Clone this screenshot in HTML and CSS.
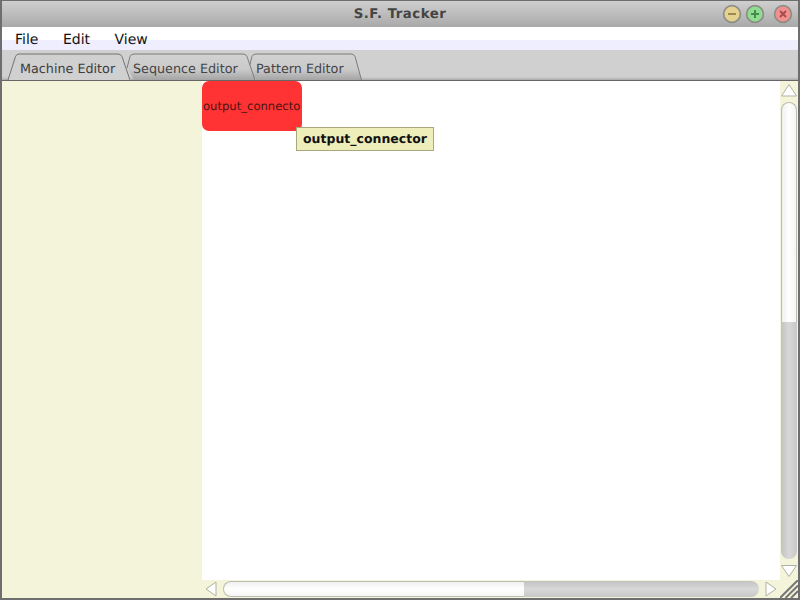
FILE: index.html
```html
<!DOCTYPE html>
<html>
<head>
<meta charset="utf-8">
<title>S.F. Tracker</title>
<link rel="stylesheet" href="styles.css">
</head>
<body>
<div class="window">
  <header class="titlebar">
    <div class="title">S.F. Tracker</div>
    <div class="controls">
      <svg class="ctl ctl-min" width="20" height="20" viewBox="0 0 20 20"><defs><filter id="soft" x="-10%" y="-10%" width="120%" height="120%"><feGaussianBlur stdDeviation="0.35"/></filter></defs><g filter="url(#soft)"><circle cx="10" cy="10" r="8.4" fill="#e4d28e" stroke="#8e8e86" stroke-width="1.7"/><rect x="6" y="9" width="8" height="2" fill="#9b8b52"/></g></svg>
      <svg class="ctl ctl-max" width="20" height="20" viewBox="0 0 20 20"><g filter="url(#soft)"><circle cx="10" cy="10" r="8.4" fill="#90dc90" stroke="#8e8e86" stroke-width="1.7"/><path d="M6 10h8M10 6v8" stroke="#458a50" stroke-width="2"/></g></svg>
      <svg class="ctl ctl-close" width="20" height="20" viewBox="0 0 20 20"><g filter="url(#soft)"><circle cx="10" cy="10" r="8.4" fill="#f29090" stroke="#8e8e86" stroke-width="1.7"/><path d="M7 7l6 6M13 7l-6 6" stroke="#a84c4c" stroke-width="2"/></g></svg>
    </div>
  </header>
  <nav class="menubar">
    <span class="menu-item">File</span>
    <span class="menu-item">Edit</span>
    <span class="menu-item">View</span>
  </nav>
  <div class="tabbar">
    <svg width="0" height="0" class="defs"><defs><linearGradient id="tabfill" x1="0" y1="0" x2="0" y2="1"><stop offset="0" stop-color="#d2d2d2"/><stop offset="0.6" stop-color="#cacaca"/><stop offset="1" stop-color="#a4a4a4"/></linearGradient></defs></svg>
    <div class="tab tab-1">
      <svg class="tab-shape" viewBox="0 0 124 27" preserveAspectRatio="none"><path d="M2 27L9.5 3.5Q10.5 1 13 1H112Q115 1 116 3.5L124 27Z" fill="#d0d0d0" stroke="none"/><path d="M2 27L9.5 3.5Q10.5 1 13 1H112Q115 1 116 3.5L124 27" fill="none" stroke="#737373"/></svg>
      <span class="tab-label">Machine Editor</span>
    </div>
    <div class="tab tab-2">
      <svg class="tab-shape" viewBox="0 0 130 27" preserveAspectRatio="none"><path d="M2 15L5 3.5Q6 1 9 1H118Q121 1 122 3.5L130 27H9Z" fill="url(#tabfill)"/><path d="M2 15L5 3.5Q6 1 9 1H118Q121 1 122 3.5L130 27" fill="none" stroke="#7c7c7c"/></svg>
      <span class="tab-label">Sequence Editor</span>
    </div>
    <div class="tab tab-3">
      <svg class="tab-shape" viewBox="0 0 113 27" preserveAspectRatio="none"><path d="M0 15L3 3.5Q4 1 7 1H102Q105 1 106 3.5L112.5 27H7Z" fill="url(#tabfill)"/><path d="M0 15L3 3.5Q4 1 7 1H102Q105 1 106 3.5L112.5 27" fill="none" stroke="#7c7c7c"/></svg>
      <span class="tab-label">Pattern Editor</span>
    </div>
  </div>
  <main class="content">
    <aside class="sidebar"></aside>
    <section class="workspace">
      <div class="hscroll-row">
        <div class="canvas">
          <div class="node">output_connecto</div>
          <div class="tooltip">output_connector</div>
        </div>
        <div class="vscroll">
          <svg class="arrow" width="16" height="16" viewBox="0 0 16 16"><path d="M0.5 13L8 1.5L15.5 13Z" fill="#fff" stroke="#b0b0a4"/></svg>
          <div class="vtrack"><div class="vthumb-light"></div><div class="vthumb"></div></div>
          <svg class="arrow" width="16" height="16" viewBox="0 0 16 16"><path d="M0.5 1.5L8 12.5L15.5 1.5Z" fill="#fff" stroke="#b0b0a4"/></svg>
        </div>
      </div>
      <div class="hscroll">
        <svg class="arrow" width="16" height="16" viewBox="0 0 16 16"><path d="M12 1L2 8L12 15Z" fill="#fff" stroke="#b0b0a4"/></svg>
        <div class="htrack"><div class="hthumb-light"></div><div class="hthumb"></div></div>
        <svg class="arrow arrow-end" width="16" height="16" viewBox="0 0 16 16"><path d="M2 1L12 8L2 15Z" fill="#fff" stroke="#b0b0a4"/></svg>
        <svg class="grip" width="18" height="18" viewBox="0 0 18 18"><path d="M0 18L18 0M5.5 18L18 5.5M11 18L18 11" stroke="#767676" stroke-width="2" fill="none"/></svg>
      </div>
    </section>
  </main>
</div>
</body>
</html>
```
FILE: styles.css
```css
* { box-sizing: border-box; }
html, body { margin: 0; padding: 0; }
body { width: 800px; height: 600px; overflow: hidden; font-family: "DejaVu Sans", sans-serif; text-rendering: geometricPrecision; }
.window { width: 800px; height: 600px; display: flex; flex-direction: column; border: 2px solid #6e6e6e; border-width: 1px 2px 2px 2px; background: #d0d0d0; }
.titlebar { height: 26px; flex: none; display: flex; align-items: center; justify-content: center; position: relative; background: linear-gradient(#cfcfcf, #a9a9a9); }
.title { font-size: 13.3px; font-weight: bold; color: #444; letter-spacing: 0.5px; }
.controls { position: absolute; right: 5px; top: 3px; display: flex; }
.ctl-max { margin-left: 3px; }
.ctl-close { margin-left: 8px; }
.menubar { height: 23px; flex: none; display: flex; padding: 3px 0 0 13px; gap: 24.5px; font-size: 14px; line-height: 21px; color: #111; background: linear-gradient(#fff 0, #fff 13px, #eeeeff 13px, #eeeeff 100%); }
.tabbar { height: 31px; flex: none; display: flex; padding: 3px 0 0 4px; background: #d0d0d0; border-bottom: 1px solid #666; box-shadow: inset 0 -3px 3px -2px #a0a0a0; }
.defs { position: absolute; }
.tab { position: relative; height: 27px; font-size: 12.75px; color: #444; }
.tab-shape { position: absolute; left: 0; top: 0; width: 100%; height: 100%; }
.tab-label { position: relative; display: block; line-height: 34px; white-space: nowrap; }
.tab-1 { width: 124px; padding-left: 14px; z-index: 3; }
.tab-2 { width: 130px; margin-left: -5px; padding-left: 8px; z-index: 2; }
.tab-3 { width: 113px; margin-left: -6px; padding-left: 7px; z-index: 1; }
.tab-1 .tab-label { color: #3c3c3c; }
.content { flex: 1; display: flex; min-height: 0; background: #f4f4da; }
.sidebar { width: 200px; flex: none; background: #f4f4da; }
.workspace { flex: 1; display: flex; flex-direction: column; min-width: 0; }
.hscroll-row { flex: 1; display: flex; min-height: 0; }
.canvas { flex: 1; position: relative; background: #fff; }
.node { position: absolute; left: 0; top: 0; width: 100px; height: 50px; border-radius: 7px; background: #ff3333; color: #4a1414; font-size: 11.6px; line-height: 51px; white-space: nowrap; overflow: hidden; padding-left: 1px; }
.tooltip { position: absolute; left: 94px; top: 46px; height: 24px; width: 138px; padding-left: 6px; line-height: 22px; font-size: 12.5px; font-weight: bold; color: #111; background: #eeeebb; border: 1px solid #a8a87c; white-space: nowrap; }
.vscroll { width: 18px; flex: none; display: flex; flex-direction: column; align-items: center; background: #f4f4da; padding-top: 2px; }
.vtrack { flex: 1; width: 16px; margin: 3px 0 5px; position: relative; display: flex; flex-direction: column; }
.vthumb-light { height: 220px; flex: none; border: 1px solid #bcbcb0; border-bottom: none; border-radius: 8px 8px 0 0; background: linear-gradient(to right, #f0f0f0, #fff 50%, #f4f4f4); }
.vthumb { flex: 1; border-radius: 0 0 8px 8px; background: linear-gradient(to right, #c2c2c2, #d8d8d8 50%, #c8c8c8); }
.hscroll { height: 18px; flex: none; display: flex; align-items: center; position: relative; padding-left: 2px; }
.htrack { width: 536px; margin-left: 3px; height: 16px; display: flex; }
.hthumb-light { width: 301px; flex: none; border: 1px solid #bcbcb0; border-right: none; border-radius: 8px 0 0 8px; background: linear-gradient(#f0f0f0, #fff 50%, #f4f4f4); }
.hthumb { flex: 1; border-radius: 0 8px 8px 0; background: linear-gradient(#c2c2c2, #d8d8d8 50%, #c8c8c8); }
.arrow-end { margin-left: 5px; }
.arrow { flex: none; display: block; }
.grip { position: absolute; right: 0; bottom: 0; }
```
